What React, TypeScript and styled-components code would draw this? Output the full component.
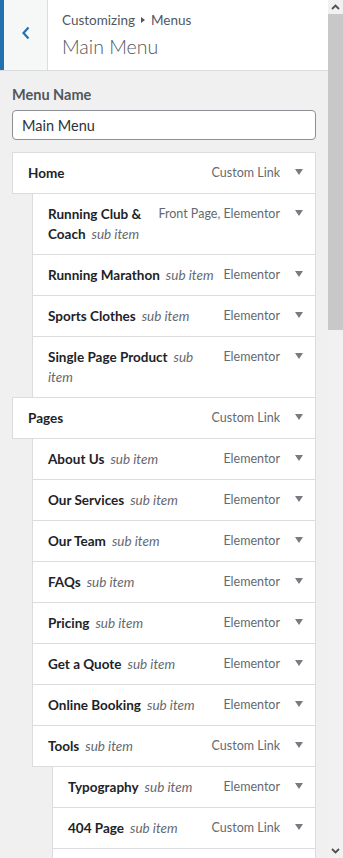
import React from "react";
import styled, { createGlobalStyle } from "styled-components";

const FONT = `Lato, "Open Sans", sans-serif`;

const GlobalStyle = createGlobalStyle`
  html, body { margin: 0; padding: 0; }
  body {
    background: #f0f0f1;
    font-family: ${FONT};
    overflow: hidden;
    -webkit-font-smoothing: antialiased;
  }
`;

const Frame = styled.div`
  display: flex;
  height: 858px;
  width: 343px;
  overflow: hidden;
`;

const Panel = styled.div`
  width: 328px;
  flex: none;
  display: flex;
  flex-direction: column;
  background: #f0f0f1;
  overflow: hidden;
`;

const Header = styled.div`
  display: flex;
  height: 70px;
  flex: none;
  background: #fff;
  border-bottom: 1px solid #dcdcde;
`;

const BackButton = styled.button`
  width: 48px;
  flex: none;
  box-sizing: border-box;
  border: 0;
  border-left: 4px solid #2271b1;
  border-right: 1px solid #dcdcde;
  background: #f6f7f7;
  display: flex;
  align-items: center;
  justify-content: center;
  padding: 0 0 4px 0;
  color: #2271b1;
`;

const TitleBlock = styled.div`
  display: flex;
  flex-direction: column;
  padding: 11px 10px 0 14px;
`;

const Crumb = styled.div`
  font-size: 13.5px;
  line-height: 18px;
  color: #50575e;
  display: flex;
  align-items: center;
  gap: 6px;
`;

const CrumbArrow = styled.span`
  width: 0;
  height: 0;
  border-top: 3px solid transparent;
  border-bottom: 3px solid transparent;
  border-left: 4px solid #50575e;
`;

const Title = styled.div`
  font-size: 19.5px;
  font-weight: 300;
  line-height: 28px;
  color: #50575e;
  margin-top: 4px;
`;

const Body = styled.div`
  padding: 14px 12px 0 12px;
  display: flex;
  flex-direction: column;
`;

const Label = styled.label`
  font-size: 14.5px;
  font-weight: 700;
  line-height: 20px;
  color: #50575e;
`;

const NameInput = styled.input`
  margin-top: 5px;
  box-sizing: border-box;
  width: 304px;
  height: 30px;
  border: 1px solid #8c8f94;
  border-radius: 4px;
  background: #fff;
  padding: 0 9px;
  font-family: ${FONT};
  font-size: 14.5px;
  color: #2c3338;
  outline: none;
`;

const MenuList = styled.div`
  margin-top: 12px;
  display: flex;
  flex-direction: column;
`;

const Item = styled.div<{ $level: number }>`
  margin-left: ${(p) => p.$level * 20}px;
  margin-top: -1px;
  &:first-child { margin-top: 0; }
  width: ${(p) => 304 - p.$level * 20}px;
  box-sizing: border-box;
  min-height: 42px;
  background: #fff;
  border: 1px solid #dcdcde;
  display: flex;
  align-items: flex-start;
  padding: 10px 12px 10px 15px;
  gap: 8px;
`;

const ItemTitle = styled.div`
  flex: 1;
  min-width: 0;
  font-size: 13.5px;
  line-height: 20px;
  font-weight: 700;
  color: #1d2327;
`;

const SubTag = styled.span`
  font-style: italic;
  font-weight: 400;
  color: #646970;
  margin-left: 6px;
`;

const Controls = styled.div`
  flex: none;
  display: flex;
  align-items: center;
  gap: 15px;
  height: 20px;
`;

const ItemType = styled.span`
  font-size: 12.5px;
  line-height: 20px;
  color: #646970;
`;

const Toggle = styled.span`
  width: 0;
  height: 0;
  border-left: 4px solid transparent;
  border-right: 4px solid transparent;
  border-top: 6px solid #787c82;
  margin-top: -3px;
`;

const ScrollTrack = styled.div`
  width: 15px;
  flex: none;
  background: #f1f1f1;
  display: flex;
  flex-direction: column;
`;

const ScrollButton = styled.div`
  height: 14px;
  flex: none;
  display: flex;
  align-items: center;
  justify-content: center;
  color: #505050;
`;

const ScrollThumb = styled.div`
  height: 316px;
  flex: none;
  background: #c8c8c8;
`;

const ScrollRest = styled.div`
  flex: 1;
`;

type Row = { level: number; title: string; sub?: boolean; type: string };

const rows: Row[] = [
  { level: 0, title: "Home", type: "Custom Link" },
  { level: 1, title: "Running Club & Coach", sub: true, type: "Front Page, Elementor" },
  { level: 1, title: "Running Marathon", sub: true, type: "Elementor" },
  { level: 1, title: "Sports Clothes", sub: true, type: "Elementor" },
  { level: 1, title: "Single Page Product", sub: true, type: "Elementor" },
  { level: 0, title: "Pages", type: "Custom Link" },
  { level: 1, title: "About Us", sub: true, type: "Elementor" },
  { level: 1, title: "Our Services", sub: true, type: "Elementor" },
  { level: 1, title: "Our Team", sub: true, type: "Elementor" },
  { level: 1, title: "FAQs", sub: true, type: "Elementor" },
  { level: 1, title: "Pricing", sub: true, type: "Elementor" },
  { level: 1, title: "Get a Quote", sub: true, type: "Elementor" },
  { level: 1, title: "Online Booking", sub: true, type: "Elementor" },
  { level: 1, title: "Tools", sub: true, type: "Custom Link" },
  { level: 2, title: "Typography", sub: true, type: "Elementor" },
  { level: 2, title: "404 Page", sub: true, type: "Custom Link" },
];

const Chevron = ({ dir }: { dir: "left" | "up" | "down" }) => {
  if (dir === "left") {
    return (
      <svg width="10" height="16" viewBox="0 0 10 16">
        <path d="M7.5 2.5 L2.5 8 L7.5 13.5" fill="none" stroke="currentColor" strokeWidth="2.2" />
      </svg>
    );
  }
  return (
    <svg width="9" height="6" viewBox="0 0 9 6">
      <path
        d={dir === "up" ? "M1 5 L4.5 1.5 L8 5" : "M1 1 L4.5 4.5 L8 1"}
        fill="none"
        stroke="currentColor"
        strokeWidth="1.8"
      />
    </svg>
  );
};

export default function App() {
  return (
    <>
      <GlobalStyle />
      <Frame>
        <Panel>
          <Header>
            <BackButton aria-label="Back">
              <Chevron dir="left" />
            </BackButton>
            <TitleBlock>
              <Crumb>
                Customizing <CrumbArrow /> Menus
              </Crumb>
              <Title>Main Menu</Title>
            </TitleBlock>
          </Header>
          <Body>
            <Label>Menu Name</Label>
            <NameInput defaultValue="Main Menu" />
            <MenuList>
              {rows.map((r, i) => (
                <Item key={i} $level={r.level}>
                  <ItemTitle>
                    {r.title}
                    {r.sub && <SubTag>sub item</SubTag>}
                  </ItemTitle>
                  <Controls>
                    <ItemType>{r.type}</ItemType>
                    <Toggle />
                  </Controls>
                </Item>
              ))}
              <Item $level={2} aria-hidden="true" />
            </MenuList>
          </Body>
        </Panel>
        <ScrollTrack>
          <ScrollButton>
            <Chevron dir="up" />
          </ScrollButton>
          <ScrollThumb />
          <ScrollRest />
          <ScrollButton>
            <Chevron dir="down" />
          </ScrollButton>
        </ScrollTrack>
      </Frame>
    </>
  );
}
